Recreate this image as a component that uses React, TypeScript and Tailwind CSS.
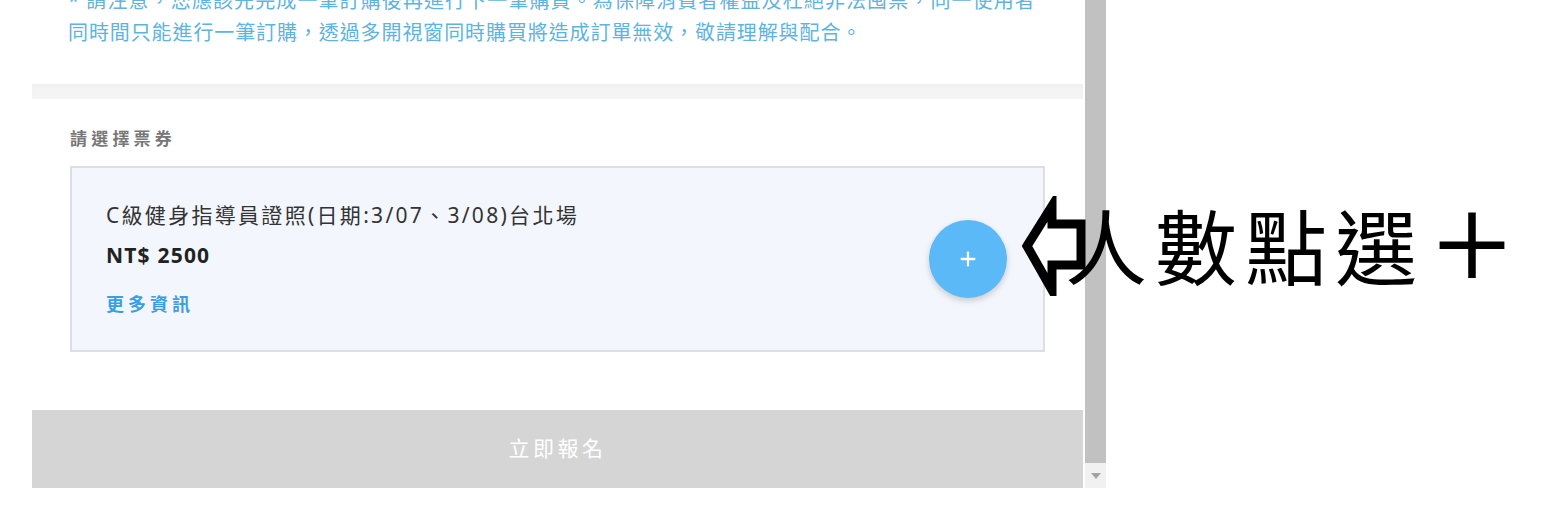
import { Plus } from 'lucide-react';

const cjk = "font-['Noto_Sans','Noto_Sans_CJK_TC',sans-serif]";

function Notice() {
  return (
    <section className="h-[84px] overflow-hidden bg-white pl-[36px] pr-[30px]">
      <div className="-mt-[15px] text-[20px] leading-[32px] tracking-[1.1px] text-[#5eb3e0] whitespace-nowrap">
        <p>* 請注意，您應該先完成一筆訂購後再進行下一筆購買。為保障消費者權益及杜絕非法囤票，同一使用者</p>
        <p className="tracking-[0.9px]">同時間只能進行一筆訂購，透過多開視窗同時購買將造成訂單無效，敬請理解與配合。</p>
      </div>
    </section>
  );
}

function TicketCard() {
  return (
    <div className="flex h-[186px] items-center justify-between border-2 border-[#dcdee3] bg-[#f3f7fd] pl-[34px] pr-[36px]">
      <div>
        <p className="text-[21px] leading-[30px] tracking-[2.3px] text-[#333]">
          C級健身指導員證照(日期:3/07、3/08)台北場
        </p>
        <p className="mt-[10px] text-[21px] font-bold leading-[30px] tracking-[1.2px] text-[#222]">
          NT$ 2500
        </p>
        <a className="mt-[20px] block text-[18px] font-bold leading-[28px] tracking-[4px] text-[#3a9ee4]">
          更多資訊
        </a>
      </div>
      <button className="flex h-[78px] w-[78px] items-center justify-center rounded-full bg-[#5ab9f6] text-white shadow-[0_3px_6px_rgba(0,0,0,0.18)]">
        <Plus size={22} strokeWidth={2.5} />
      </button>
    </div>
  );
}

function Scrollbar() {
  return (
    <div className="ml-[2px] flex w-[21px] flex-col">
      <div className="flex-1 bg-[#c1c1c1]" />
      <div className="flex h-[25px] items-center justify-center bg-[#f1f1f1]">
        <svg width="10" height="6" viewBox="0 0 10 6">
          <path d="M0 0 L10 0 L5 6 Z" fill="#a3a3a3" />
        </svg>
      </div>
    </div>
  );
}

function Annotation() {
  return (
    <div className="absolute left-[1020px] top-[196px] flex items-start">
      <svg width="68" height="100" viewBox="0 0 68 100" className="shrink-0">
        <path
          d="M7 50 L32 10 L32 28 L61 28 L61 69 L32 69 L32 94 Z"
          fill="white"
          stroke="black"
          strokeWidth="9"
          strokeLinejoin="miter"
        />
      </svg>
      <span className="-ml-[23px] -mt-[1px] text-[82px] leading-none tracking-[8px] text-black font-['Noto_Sans_CJK_TC',sans-serif]">
        人數點選
        <span className="ml-[2px] text-[90px] font-medium">＋</span>
      </span>
    </div>
  );
}

export default function App() {
  return (
    <div className={`relative h-[516px] w-[1562px] overflow-hidden bg-white ${cjk}`}>
      <div className="flex h-[488px]">
        <div className="ml-[32px] flex w-[1051px] flex-col">
          <Notice />
          <div className="h-[15px] bg-[#f4f4f4] shadow-[inset_0_3px_3px_rgba(0,0,0,0.02)]" />
          <section className="h-[311px] bg-white px-[38px] pt-[28px]">
            <h3 className="mb-[15px] text-[17px] font-semibold leading-[24px] tracking-[4.2px] text-[#777]">
              請選擇票券
            </h3>
            <TicketCard />
          </section>
          <button className="h-[78px] bg-[#d5d5d5] text-[21px] tracking-[3.5px] text-white">
            立即報名
          </button>
        </div>
        <Scrollbar />
      </div>
      <Annotation />
    </div>
  );
}
